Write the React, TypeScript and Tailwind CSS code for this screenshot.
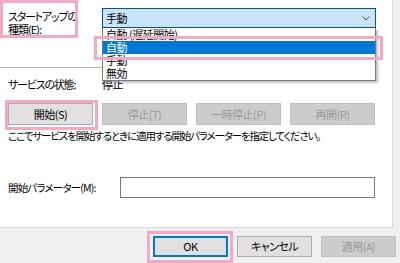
export default function App() {
  const items = ['自動 (遅延開始)', '自動', '手動', '無効'];

  return (
    <div className="relative h-[263px] w-[400px] overflow-hidden bg-[#f0f0f0] font-['Noto_Sans_CJK_JP',sans-serif] text-[11px] tracking-[-0.5px] text-black [font-feature-settings:'palt']">
      {/* main page */}
      <div className="h-[228px] w-[393px] border-b border-r border-[#d9d9d9] bg-white">
        <div className="flex h-[67px] pl-[8px] pt-[8px]">
          <div className="w-[94px] pt-[2px] leading-[13px]">
            <span className="tracking-[-1.2px]">スタートアップの</span>
            <br />
            <span className="tracking-[-1px]">種類(E):</span>
          </div>
          <div className="flex h-[20px] w-[274px] items-center justify-between border border-[#0054a6] bg-[#cce4f7] pl-[3px] pr-[5px] leading-none">
            <span>手動</span>
            <svg width="8" height="5" viewBox="0 0 8 5" className="text-[#444]">
              <path d="M0.5 0.5 L4 4 L7.5 0.5" fill="none" stroke="currentColor" strokeWidth="1" />
            </svg>
          </div>
        </div>
        <div className="h-px w-[376px] bg-[#b0b0b0]" />

        <div className="mt-[9px] flex h-[14px] pl-[8px] leading-[14px]">
          <span className="w-[94px] tracking-[-1.2px]">サービスの状態:</span>
          <span>停止</span>
        </div>

        <div className="mt-[12px] flex gap-[9px] pl-[8px]">
          <button className="flex h-[22px] w-[85px] items-center justify-center border border-[#adadad] bg-[#e1e1e1]">
            開始(S)
          </button>
          {['停止(T)', '一時停止(P)', '再開(R)'].map((t) => (
            <button
              key={t}
              className="flex h-[22px] w-[85px] items-center justify-center border border-[#bfbfbf] bg-[#cccccc] text-[#9a9a9a]"
            >
              {t}
            </button>
          ))}
        </div>

        <p className="mt-[4px] h-[14px] whitespace-nowrap pl-[8px] text-[10.5px] leading-[14px] tracking-[-1.15px]">
          ここでサービスを開始するときに適用する開始パラメーターを指定してください。
        </p>

        <div className="mt-[34px] flex items-center pl-[8px]">
          <span className="w-[112px] text-[10.5px] tracking-[-0.8px]">開始パラメーター(M):</span>
          <div className="h-[21px] w-[255px] border border-[#7a7a7a] bg-white" />
        </div>
      </div>

      {/* dialog buttons */}
      <div className="mt-[8px] flex gap-[9px] pl-[153px]">
        <button className="flex h-[21px] w-[75px] items-center justify-center border-2 border-[#0078d7] bg-[#e1e1e1]">
          OK
        </button>
        <button className="flex h-[21px] w-[75px] items-center justify-center border border-[#adadad] bg-[#e1e1e1]">
          キャンセル
        </button>
        <button className="flex h-[21px] w-[75px] items-center justify-center border border-[#bfbfbf] bg-[#cccccc] text-[#9a9a9a]">
          適用(A)
        </button>
      </div>

      {/* open dropdown list */}
      <div className="absolute left-[102px] top-[28px] w-[274px] border-x border-b border-[#7a7a7a] bg-white shadow-[2px_2px_2px_rgba(0,0,0,0.25)]">
        {items.map((t, i) => (
          <div
            key={t}
            className={
              i === 1
                ? 'h-[13px] bg-[#0078d7] pl-[3px] leading-[13px] text-white'
                : 'h-[13px] pl-[3px] leading-[13px]'
            }
          >
            {t}
          </div>
        ))}
      </div>

      {/* pink callout frames */}
      <div className="absolute left-0 top-0 h-[38px] w-[78px] border-[3px] border-[#f4a8c6]" />
      <div className="absolute left-[94px] top-[36px] h-[24px] w-[289px] border-[3px] border-[#f4a8c6]" />
      <div className="absolute left-[5px] top-[100px] h-[30px] w-[93px] border-[3px] border-[#f4a8c6]" />
      <div className="absolute left-[147px] top-[231px] h-[32px] w-[86px] border-[3px] border-[#f4a8c6]" />
    </div>
  );
}
